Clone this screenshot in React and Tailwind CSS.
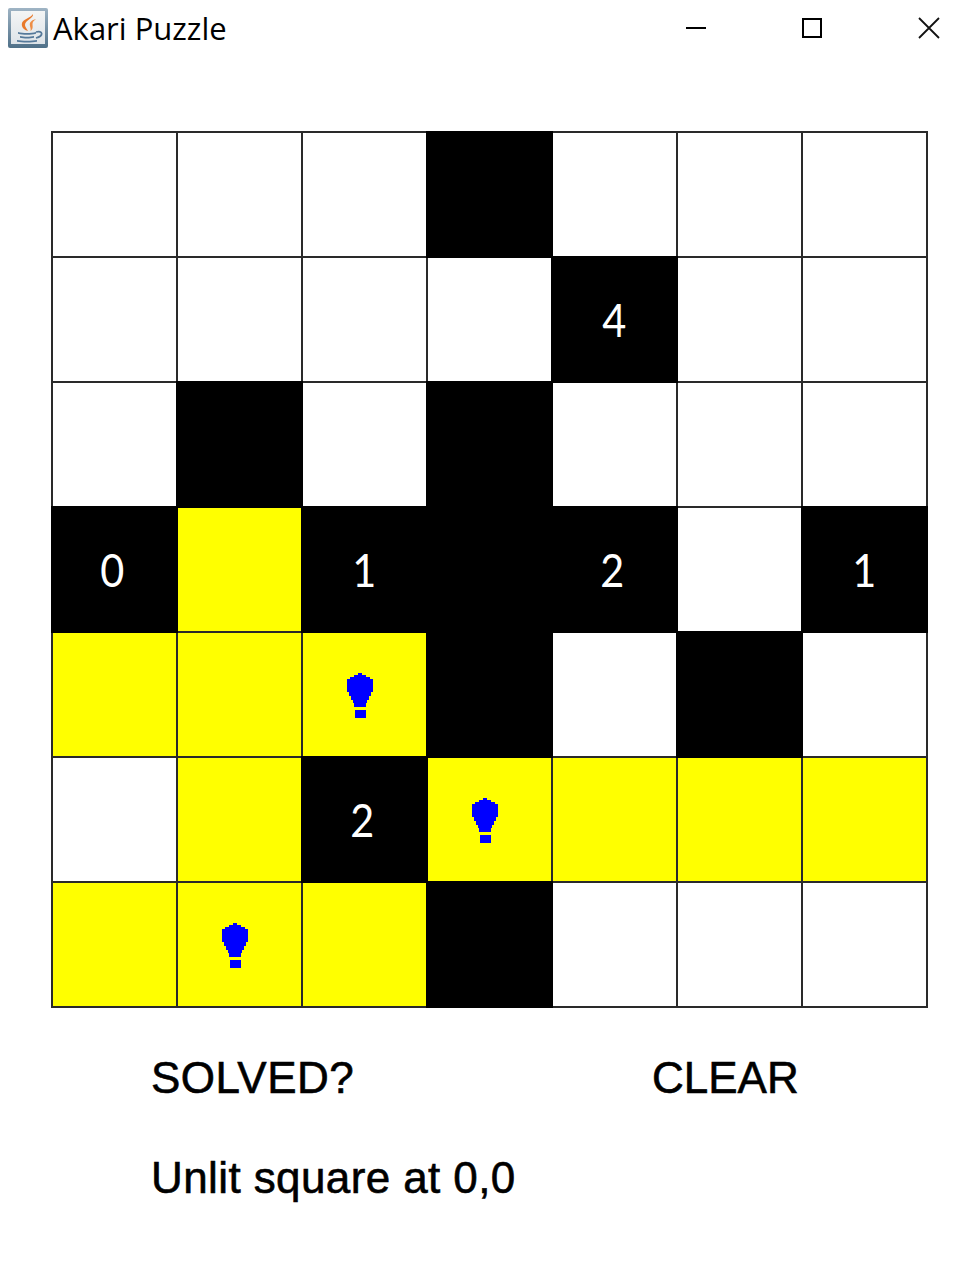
const GRID = [
  ["w","w","w","b","w","w","w"],
  ["w","w","w","w","4","w","w"],
  ["w","b","w","b","w","w","w"],
  ["0","y","1","b","2","w","1"],
  ["y","y","L","b","w","b","w"],
  ["w","y","2","L","y","y","y"],
  ["y","L","y","b","w","w","w"],
];

function Bulb() {
  return (
    <svg width="27" height="47" viewBox="0 0 27 47" className="block" fill="#0000ff" aria-hidden="true">
      <path d="M11 1h4v2h4v2h4v2h3v13h-2v4h-2v4h-2v3h-1v4H7v-4H6v-3H4v-4H2v-4H0V7h3V5h4V3h4z" />
      <rect x="8" y="38" width="11" height="8" />
    </svg>
  );
}

function JavaIcon() {
  return (
    <svg width="40" height="40" viewBox="0 0 40 40" aria-hidden="true">
      <defs>
        <linearGradient id="frame" x1="0" y1="0" x2="0" y2="1">
          <stop offset="0" stopColor="#9fb4c4" />
          <stop offset="1" stopColor="#4f7088" />
        </linearGradient>
        <linearGradient id="inner" x1="0" y1="0" x2="0" y2="1">
          <stop offset="0" stopColor="#f4f5f5" />
          <stop offset="1" stopColor="#dde3e8" />
        </linearGradient>
      </defs>
      <rect x="0" y="0" width="40" height="40" rx="2" fill="url(#frame)" />
      <rect x="3" y="3" width="34" height="33" fill="url(#inner)" />
      <path d="M25 6c1 4-8 6-8 11 0 2 2 4 3 6-4-1-7-4-6-8 1-4 9-5 11-9z" fill="#e8792b" />
      <path d="M28 11c-4 1-7 3-6 7 .3 1.500 1 3 .5 5 3-2 2-5 2-7 0-2 1.500-3.500 3.500-5z" fill="#ee8d45" />
      <path d="M10 24c5 1.300 13 1.300 18 0v1.800c-5 1.300-13 1.300-18 0z" fill="#55799a" />
      <path d="M12 28c4 1 10 1 14 0v1.800c-4 1-10 1-14 0z" fill="#55799a" />
      <path d="M9 32c5 1 15 1 20 0v1.800c-5 1-15 1-20 0z" fill="#55799a" />
      <path d="M28 24c7-2 8 4 0 6" fill="none" stroke="#55799a" strokeWidth="1.800" />
    </svg>
  );
}

function Cell({ v, nudge }) {
  if (v === "w") return <div className="bg-white" />;
  if (v === "b") return <div className="bg-black shadow-[0_0_0_2px_#000]" />;
  if (v === "y") return <div className="bg-[#ffff00]" />;
  if (v === "L")
    return (
      <div className="bg-[#ffff00] pl-[44px] pt-[39px]">
        <Bulb />
      </div>
    );
  return (
    <div
      className={`flex items-center justify-center bg-black pb-[1px] font-['Lato',sans-serif] text-[46px] text-white shadow-[0_0_0_2px_#000] ${
        nudge ? "pr-[4px]" : ""
      }`}
    >
      <span className="inline-block scale-x-[0.9]">{v}</span>
    </div>
  );
}

export default function App() {
  return (
    <div className="h-[1266px] w-[962px] overflow-hidden bg-white font-['Liberation_Sans',sans-serif] text-black">
      <header className="flex h-[56px] items-center pl-2">
        <JavaIcon />
        <span className="ml-[5px] font-['Open_Sans',sans-serif] text-[31px] leading-none">Akari Puzzle</span>
        <div className="ml-auto flex items-center">
          <svg width="22" height="22" viewBox="0 0 22 22" className="mr-[94px]" aria-hidden="true">
            <path d="M1 11h20" stroke="#000" strokeWidth="2" />
          </svg>
          <svg width="22" height="22" viewBox="0 0 22 22" className="mr-[95px]" aria-hidden="true">
            <rect x="2" y="2" width="18" height="18" fill="none" stroke="#000" strokeWidth="2" />
          </svg>
          <svg width="22" height="22" viewBox="0 0 22 22" className="mr-[22px]" aria-hidden="true">
            <path d="M1 1l20 20M21 1L1 21" stroke="#111" strokeWidth="1.800" />
          </svg>
        </div>
      </header>
      <main className="ml-[51px] mt-[75px]">
        <div className="grid h-[877px] w-[877px] grid-cols-[repeat(7,123px)] grid-rows-[repeat(7,123px)] gap-[2px] bg-[#2a2a2a] p-[2px]">
          {GRID.flat().map((v, i) => (
            <Cell key={i} v={v} nudge={i === 21 || i === 25 || i === 37} />
          ))}
        </div>
        <div className="ml-[100px] mt-[45px] flex h-[50px] items-center text-[44px] leading-none [-webkit-text-stroke:0.6px_#000]">
          <span className="w-[501px] tracking-[0.5px]">SOLVED?</span>
          <span>CLEAR</span>
        </div>
        <div className="ml-[100px] mt-[50px] flex h-[50px] items-center text-[44px] leading-none tracking-[0.4px] [-webkit-text-stroke:0.6px_#000]">
          Unlit square at 0,0
        </div>
      </main>
    </div>
  );
}
